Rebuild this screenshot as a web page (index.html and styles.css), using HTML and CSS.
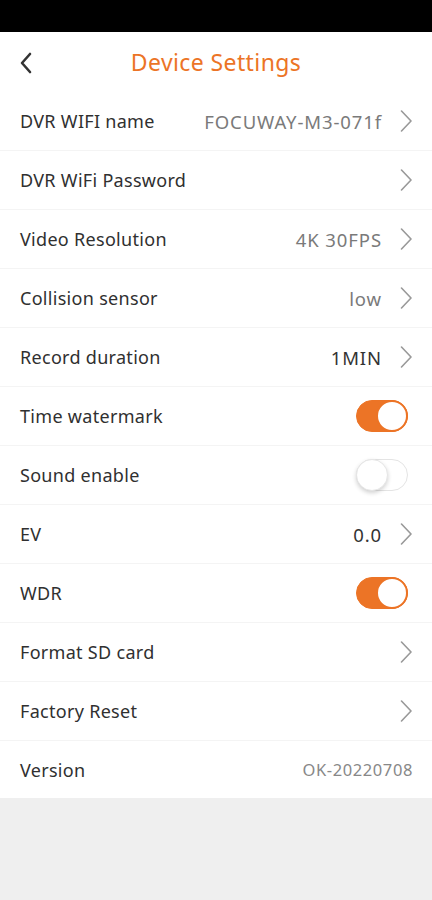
FILE: index.html
```html
<!DOCTYPE html>
<html lang="en">
<head>
	<meta charset="UTF-8" />
	<title>Device Settings</title>
	<link rel="stylesheet" href="styles.css">
</head>
<body>
	<div class="statusbar"></div>

	<!-- title bar -->
	<div class="header">
		<span class="back">
			<svg width="14" height="22" viewBox="0 0 14 22"><path d="M11 2 L3 11 L11 20" fill="none" stroke="#333" stroke-width="2.6" stroke-linecap="round" stroke-linejoin="round"/></svg>
		</span>
		<h1>Device Settings</h1>
	</div>

	<ul class="settings">
		<li><span class="label">DVR WIFI name</span><span class="value">FOCUWAY-M3-071f</span><span class="chev"></span></li>
		<li><span class="label">DVR WiFi Password</span><span class="value"></span><span class="chev"></span></li>
		<li><span class="label">Video Resolution</span><span class="value">4K 30FPS</span><span class="chev"></span></li>
		<li><span class="label">Collision sensor</span><span class="value">low</span><span class="chev"></span></li>
		<li><span class="label">Record duration</span><span class="value dark">1MIN</span><span class="chev"></span></li>
		<li><span class="label">Time watermark</span><span class="switch on"><i></i></span></li>
		<li><span class="label">Sound enable</span><span class="switch"><i></i></span></li>
		<li><span class="label">EV</span><span class="value dark">0.0</span><span class="chev"></span></li>
		<li><span class="label">WDR</span><span class="switch on"><i></i></span></li>
		<li><span class="label">Format SD card</span><span class="value"></span><span class="chev"></span></li>
		<li><span class="label">Factory Reset</span><span class="value"></span><span class="chev"></span></li>
		<li><span class="label">Version</span><span class="value small">OK-20220708</span></li>
	</ul>
</body>
</html>
```

FILE: styles.css
```css
html,
body {
	margin: 0;
	padding: 0;
	background-color: #efefef;
	font-family: "Noto Sans", Lato, sans-serif;
}

.statusbar {
	height: 32px;
	background-color: #000;
}

.header {
	position: relative;
	height: 60px;
	display: flex;
	align-items: center;
	justify-content: center;
	background-color: #fff;
}

.header .back {
	position: absolute;
	left: 19px;
	top: 20px;
}

.header h1 {
	margin: 0;
	font-size: 23px;
	font-weight: 400;
	letter-spacing: 0.4px;
	color: #ec7426;
}

.settings {
	list-style-type: none;
	margin: 0;
	padding: 0;
	background-color: #fff;
}

.settings li {
	height: 58px;
	display: flex;
	align-items: center;
	padding: 0 18px 0 20px;
	border-bottom: 1px solid #f4f4f4;
}

.settings li:last-child {
	border-bottom: none;
	height: 57px;
}

.label {
	flex: 1;
	font-size: 18px;
	letter-spacing: 0.3px;
	color: #303030;
}

.value {
	font-size: 18.5px;
	letter-spacing: 0.9px;
	color: #7a7a7a;
}

.value.dark {
	color: #333;
}

.value.small {
	font-size: 16.5px;
	letter-spacing: 0.6px;
	color: #888;
	margin-right: 1px;
}

.chev {
	width: 12px;
	height: 22px;
	margin-left: 18px;
	margin-right: 2px;
	background: no-repeat center;
	background-image: url("data:image/svg+xml,%3Csvg xmlns='http://www.w3.org/2000/svg' width='12' height='22' viewBox='0 0 12 22'%3E%3Cpath d='M1.5 1 L11 11 L1.5 21' fill='none' stroke='%23999' stroke-width='1.6' stroke-linecap='round' stroke-linejoin='round'/%3E%3C/svg%3E");
}

.switch {
	position: relative;
	width: 52px;
	height: 32px;
	box-sizing: border-box;
	border-radius: 16px;
	border: 1px solid #e4e4e4;
	background-color: #fff;
	margin-right: 6px;
}

.switch i {
	position: absolute;
	top: -1px;
	left: -1px;
	width: 32px;
	height: 32px;
	box-sizing: border-box;
	border-radius: 50%;
	background-color: #fff;
	border: 1px solid #e6e6e6;
	box-shadow: 0 2px 4px rgba(0, 0, 0, 0.18);
}

.switch.on {
	background-color: #ec7426;
	border-color: #ec7426;
}

.switch.on i {
	left: auto;
	right: -1px;
	border: 2px solid #ec7426;
	box-shadow: none;
}
```
